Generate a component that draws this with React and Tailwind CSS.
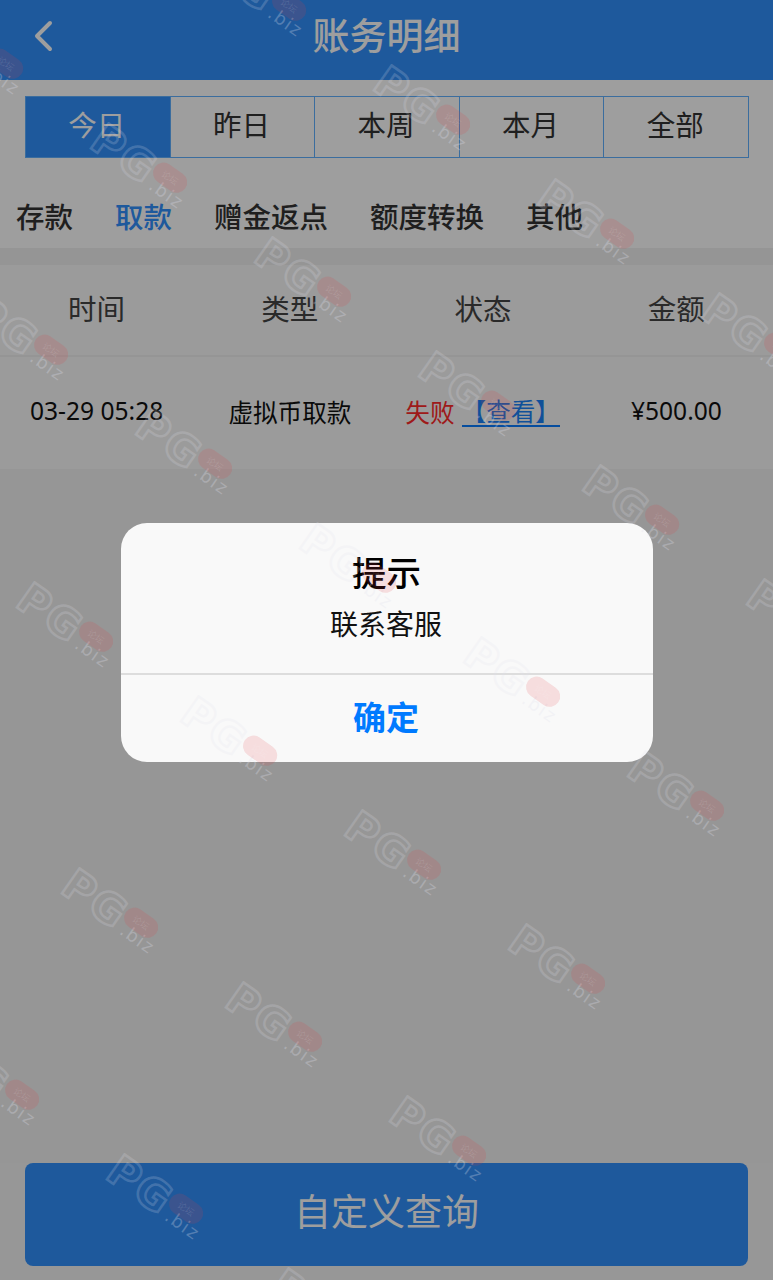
const FONT = "font-['Noto_Sans_CJK_SC','Noto_Sans',sans-serif]";

const RANGES = ["今日", "昨日", "本周", "本月", "全部"];
const KINDS = ["存款", "取款", "赠金返点", "额度转换", "其他"];
const HEADS = ["时间", "类型", "状态", "金额"];

const MARKS = [];
for (let i = -3; i < 9; i++) {
  for (let j = -3; j < 9; j++) {
    const x = 170 + i * 164 - j * 283;
    const y = 177 + i * 114 + j * 58.3;
    const inView = x > -90 && x < 860 && y > -60 && y < 1330;
    const absentCorner = (x > 560 && y < 100) || (x > 600 && y > 1000);
    if (inView && !absentCorner) MARKS.push({ x, y });
  }
}

function Watermark({ x, y }) {
  return (
    <div className="absolute w-0 h-0 rotate-[35deg]" style={{ left: x, top: y }}>
      <span className="absolute left-[-85px] top-[-15px] font-['DejaVu_Sans',sans-serif] font-bold text-[42px] leading-[46px] tracking-[2px] text-transparent [-webkit-text-stroke:2.5px_rgba(225,225,238,0.2)]">
        PG
      </span>
      <span className="absolute left-[-12px] top-[6px] font-['DejaVu_Sans',sans-serif] text-[18px] leading-[20px] tracking-[1.5px] text-[rgba(225,225,238,0.28)]">
        .biz
      </span>
      <span className="absolute left-[-18px] top-[-10px] w-[37px] h-[21px] rounded-full bg-[rgba(230,60,70,0.15)] flex items-center justify-center text-[9px] leading-none text-[rgba(255,255,255,0.12)]">
        论坛
      </span>
    </div>
  );
}

export default function App() {
  return (
    <div className={`relative w-[773px] h-[1280px] overflow-hidden bg-white flex flex-col ${FONT}`}>
      <header className="h-20 shrink-0 bg-[#3190fc] flex items-center justify-center relative">
        <svg className="absolute left-[31px] top-[20px]" width="24" height="32" viewBox="0 0 24 32" fill="none">
          <path d="M19 3 L6 16 L19 29" stroke="#fff" strokeWidth="4" strokeLinecap="round" strokeLinejoin="round" />
        </svg>
        <h1 className="text-[37px] leading-none font-medium text-white -mt-[12px]">账务明细</h1>
      </header>

      <div className="ml-[25px] mr-[24px] mt-4 h-[62px] flex border-[1.5px] border-[#60b0ff]">
        {RANGES.map((r, i) => (
          <div
            key={r}
            className={
              i === 0
                ? "flex-1 flex items-center justify-center text-[28.5px] pb-[5px] pr-[2px] bg-[#3190fc] text-white"
                : "flex-1 flex items-center justify-center text-[28.5px] pb-[5px] pr-[2px] border-l-[1.5px] border-[#60b0ff] text-[#333]"
            }
          >
            {r}
          </div>
        ))}
      </div>

      <nav className="h-[90px] flex items-center gap-[42px] pl-[16px] pt-[34px] pb-[8px] text-[28.5px] font-medium text-[#333]">
        {KINDS.map((k, i) => (
          <span key={k} className={i === 1 ? "text-[#3190fc]" : ""}>
            {k}
          </span>
        ))}
      </nav>

      <div className="h-[17px] bg-[#f0f0f0]" />

      <section className="h-[204px] shrink-0 bg-[#fafafa] flex flex-col">
        <div className="h-[92px] grid grid-cols-4 items-center border-b-2 border-[#f0f0f0] text-[28.5px] text-[#444]">
          {HEADS.map((h) => (
            <div key={h} className="text-center pb-[4px]">
              {h}
            </div>
          ))}
        </div>
        <div className="flex-1 grid grid-cols-4 items-center text-[24.6px] text-[#111] pb-[4px]">
          <div className="text-center font-['Noto_Sans',sans-serif]">03-29 05:28</div>
          <div className="text-center">虚拟币取款</div>
          <div className="flex items-center justify-center whitespace-nowrap pr-[1px] text-[#ff2a2a]">
            失败
            <span className="ml-[7px] leading-[30px] border-b-2 border-[#0a7cff] text-[#1a82f7]">【查看】</span>
          </div>
          <div className="text-center font-['Noto_Sans',sans-serif]">¥500.00</div>
        </div>
      </section>

      <div className="flex-1 bg-[#f2f2f2]" />

      <div className="h-[117px] shrink-0 bg-[#f4f4f4] px-[25px] pb-[14px]">
        <button className="w-[723px] h-[103px] rounded-lg bg-[#3190fc] text-white text-[37px] pb-[8px] font-normal">
          自定义查询
        </button>
      </div>

      <div className="absolute inset-0 bg-black/[0.38]" />

      <div className="absolute left-[121px] top-[523px] w-[532px] h-[239px] rounded-[26px] bg-[#f9f9f9] flex flex-col">
        <div className="h-[152px] shrink-0 border-b-2 border-[#dddddd] flex flex-col items-center pt-[23px]">
          <div className="text-[34.5px] leading-[50px] font-medium text-black -ml-[1px]">提示</div>
          <div className="text-[28px] leading-[42px] text-[#111] mt-[6px] -ml-[2px]">联系客服</div>
        </div>
        <div className="flex-1 flex items-center justify-center text-[33px] font-bold text-[#007aff] -ml-[2px] pb-[4px]">确定</div>
      </div>

      <div className="absolute inset-0 pointer-events-none overflow-hidden">
        {MARKS.map((m) => (
          <Watermark key={`${m.x}-${m.y}`} x={m.x} y={m.y} />
        ))}
      </div>
    </div>
  );
}
